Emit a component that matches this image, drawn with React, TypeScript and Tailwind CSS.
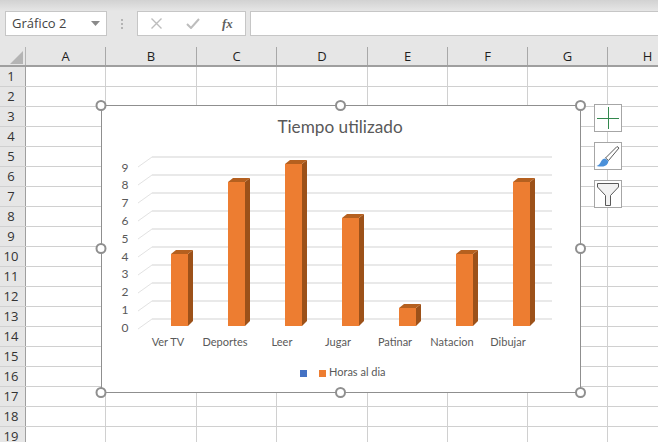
import React from "react";

const cols = [
  { l: "A", w: "w-[80px]" },
  { l: "B", w: "w-[91px]" },
  { l: "C", w: "w-[80px]" },
  { l: "D", w: "w-[91px]" },
  { l: "E", w: "w-[80px]" },
  { l: "F", w: "w-[80px]" },
  { l: "G", w: "w-[80px]" },
  { l: "H", w: "w-[80px]" },
];
const rows = Array.from({ length: 19 }, (_, i) => i + 1);

const bars = [
  { name: "Ver TV", v: 4, x: 171, lx: 168 },
  { name: "Deportes", v: 8, x: 228, lx: 225 },
  { name: "Leer", v: 9, x: 285, lx: 282 },
  { name: "Jugar", v: 6, x: 342, lx: 338 },
  { name: "Patinar", v: 1, x: 399, lx: 395 },
  { name: "Natacion", v: 4, x: 456, lx: 452 },
  { name: "Dibujar", v: 8, x: 513, lx: 508 },
];
const handles = [
  [101, 105.5],
  [340.5, 105.5],
  [580.5, 105.5],
  [101, 248.5],
  [580.5, 248.5],
  [101, 392.5],
  [340.5, 392.5],
  [580.5, 392.5],
];

function Chart() {
  return (
    <svg
      className="absolute left-0 top-0 pointer-events-none"
      width={658}
      height={442}
      viewBox="0 0 658 442"
    >
      <rect x={101.5} y={105.5} width={479} height={287} fill="#fff" stroke="#8f8f8f" strokeWidth={1} />
      <text x={340} y={133} textAnchor="middle" className="font-['Lato'] text-[17.2px] fill-[#595959]">
        Tiempo utilizado
      </text>
      {Array.from({ length: 10 }, (_, i) => {
        const y = 157 + i * 18;
        return (
          <g key={i}>
            <line x1={152} y1={y} x2={552} y2={y} stroke="#e2e2e2" strokeWidth={1.6} />
            <line x1={152} y1={y} x2={138} y2={y + 10} stroke="#e2e2e2" strokeWidth={1} />
            <text x={125} y={171.5 + i * 17.8} textAnchor="middle" className="font-['Lato'] text-[12px] fill-[#595959]">
              {9 - i}
            </text>
          </g>
        );
      })}
      {bars.map((b) => {
        const top = 326 - b.v * 18;
        const x2 = b.x + 17;
        return (
          <g key={b.name}>
            <polygon points={`${x2},${top} ${x2 + 5},${top - 4} ${x2 + 5},321 ${x2},326`} fill="#9c5119" />
            <polygon points={`${b.x},${top} ${b.x + 5},${top - 4} ${x2 + 5},${top - 4} ${x2},${top}`} fill="#b5601f" />
            <rect x={b.x} y={top} width={17} height={326 - top} fill="#ed7d31" />
            <text x={b.lx} y={346} textAnchor="middle" className="font-['Lato'] text-[11px] fill-[#595959]">
              {b.name}
            </text>
          </g>
        );
      })}
      <rect x={300} y={370} width={7} height={7} fill="#4472c4" />
      <rect x={319} y={370} width={7} height={7} fill="#ed7d31" />
      <text x={329} y={376} className="font-['Lato'] text-[11px] fill-[#595959]">
        Horas al dia
      </text>
      {handles.map(([x, y], i) => (
        <circle key={i} cx={x} cy={y} r={4.5} fill="#fff" stroke="#8f8f8f" strokeWidth={2} />
      ))}
    </svg>
  );
}

function SideButtons() {
  return (
    <div className="absolute left-[594px] top-[104px] flex flex-col gap-[10px]">
      <div className="w-[28px] h-[28px] bg-white border border-[#a6a6a6]">
        <svg width={26} height={26} viewBox="0 0 26 26">
          <path d="M13.5 2V24M2 13.5H24" stroke="#33884e" strokeWidth={1} fill="none" />
        </svg>
      </div>
      <div className="w-[28px] h-[28px] bg-white border border-[#a6a6a6]">
        <svg width={26} height={26} viewBox="0 0 26 26">
          <path d="M22 3.5L24 5L13.5 17.5L10.5 15Z" fill="#fff" stroke="#595959" strokeWidth={1} />
          <path d="M10 15.5L13.5 18C13 21 11 23.5 7 23.5C5 23.5 3 23.5 1.5 23C4 22 5 21 6 18.5C7 16.5 8.5 15.5 10 15.5Z" fill="#4a90d9" />
        </svg>
      </div>
      <div className="w-[28px] h-[28px] bg-white border border-[#a6a6a6]">
        <svg width={26} height={26} viewBox="0 0 26 26">
          <path d="M2.5 2.5H23.5V6L15.5 14.5V24.5H10.5V14.5L2.5 6Z" fill="#f2f2f2" stroke="#595959" strokeWidth={1} />
        </svg>
      </div>
    </div>
  );
}

export default function App() {
  return (
    <div className="relative w-[658px] h-[442px] overflow-hidden bg-white font-['Open_Sans',sans-serif] text-[#262626]">
      <div className="h-[11px] bg-gradient-to-b from-[#d2d2d2] to-[#e6e6e6]" />
      <div className="h-[25px] bg-[#e6e6e6] flex pl-[5px]">
        <div className="w-[102px] h-full bg-white border border-[#c6c6c6] flex items-center pl-[6px] pr-[6px] text-[13px] text-[#444]">
          <span className="flex-1">Gráfico 2</span>
          <svg width={9} height={5} viewBox="0 0 9 5">
            <path d="M0 0H9L4.5 5Z" fill="#8a8a8a" />
          </svg>
        </div>
        <div className="w-[30px] flex items-center justify-center">
          <div className="w-[2px] h-[10px] border-l-2 border-dotted border-[#b4b4b4]" />
        </div>
        <div className="w-[109px] h-full bg-white border border-[#c6c6c6] flex items-center">
          <svg className="ml-[13px]" width={11} height={11} viewBox="0 0 11 11">
            <path d="M0.5 0.5L10.5 10.5M10.5 0.5L0.5 10.5" stroke="#bdbdbd" strokeWidth={1.4} fill="none" />
          </svg>
          <svg className="ml-[24px]" width={14} height={11} viewBox="0 0 14 11">
            <path d="M1 6L5 10L13 1" stroke="#bdbdbd" strokeWidth={2} fill="none" />
          </svg>
          <span className="ml-[22px] font-['Liberation_Serif',serif] italic font-bold text-[13px] text-[#5f5f5f]">fx</span>
        </div>
        <div className="ml-[4px] flex-1 h-full bg-white border border-[#c6c6c6] border-r-0" />
      </div>
      <div className="h-[11px] bg-[#e6e6e6]" />
      <div className="h-[20px] flex bg-[#e6e6e6] border-b-2 border-[#9f9f9f] text-[13px] leading-[19px] text-[#1f1f1f]">
        <div className="w-[26px] shrink-0 relative border-r border-[#b4b4b4]">
          <svg className="absolute left-[10px] top-[4px]" width={13} height={13} viewBox="0 0 13 13">
            <path d="M13 0V13H0Z" fill="#b4b4b4" />
          </svg>
        </div>
        {cols.map((c) => (
          <div key={c.l} className={`${c.w} shrink-0 text-center border-r border-[#a8a8a8]`}>
            {c.l}
          </div>
        ))}
      </div>
      {rows.map((r) => (
        <div key={r} className="h-[20px] flex border-b border-[#d0d0d0]">
          <div className="w-[26px] shrink-0 bg-[#e6e6e6] border-r border-[#9f9f9f] text-[13px] leading-[19px] text-center text-[#333] pr-[3px]">
            {r}
          </div>
          {cols.map((c) => (
            <div key={c.l} className={`${c.w} shrink-0 border-r border-[#d0d0d0]`} />
          ))}
        </div>
      ))}
      <Chart />
      <SideButtons />
    </div>
  );
}
